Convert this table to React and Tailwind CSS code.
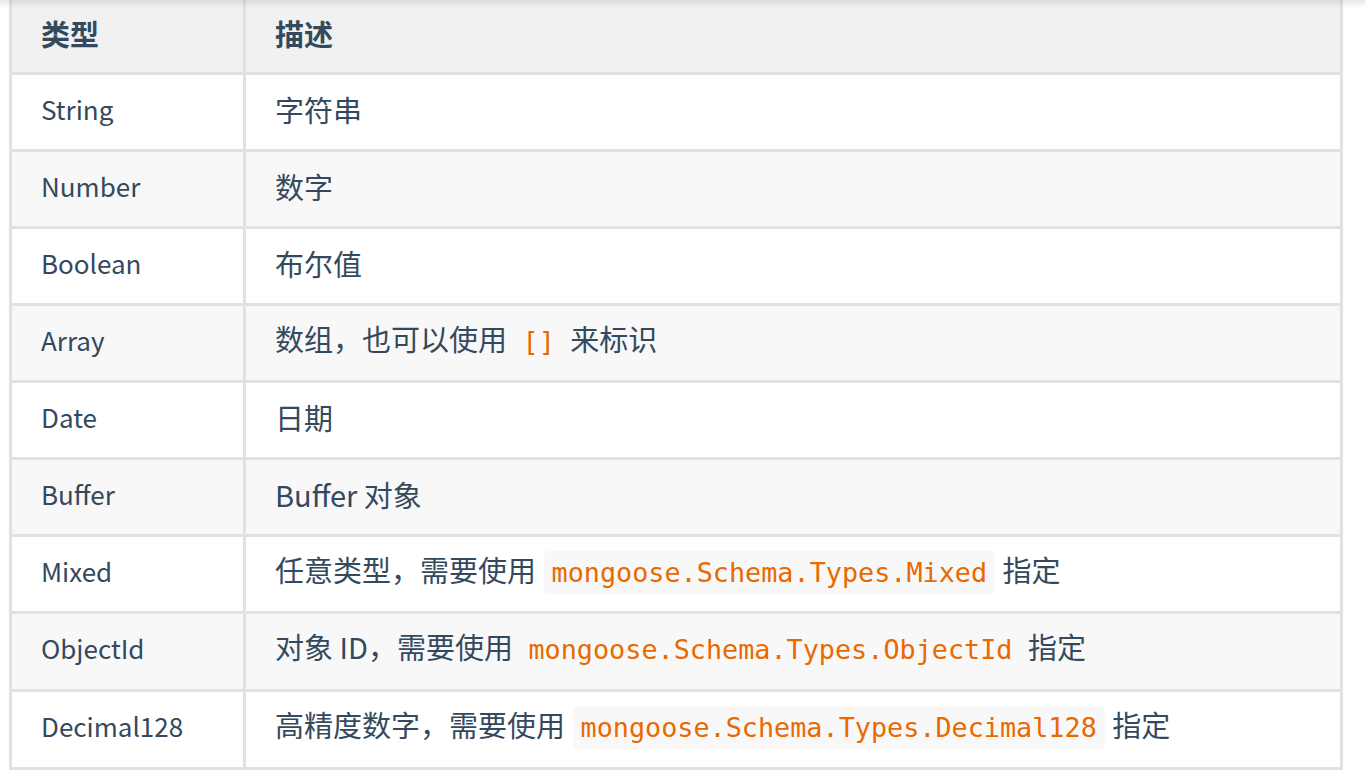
const rows = [
  { type: 'String', desc: ['字符串'] },
  { type: 'Number', desc: ['数字'] },
  { type: 'Boolean', desc: ['布尔值'] },
  { type: 'Array', desc: ['数组，也可以使用 ', { code: '[]' }, ' 来标识'] },
  { type: 'Date', desc: ['日期'] },
  { type: 'Buffer', desc: ['Buffer 对象'] },
  { type: 'Mixed', desc: ['任意类型，需要使用 ', { code: 'mongoose.Schema.Types.Mixed' }, ' 指定'] },
  { type: 'ObjectId', desc: ['对象 ID，需要使用 ', { code: 'mongoose.Schema.Types.ObjectId' }, ' 指定'] },
  { type: 'Decimal128', desc: ['高精度数字，需要使用 ', { code: 'mongoose.Schema.Types.Decimal128' }, ' 指定'] },
];

function Code({ children }) {
  return (
    <code className="mx-[1px] rounded-[4px] bg-[#f8f8f8] px-[8px] py-[6px] font-['DejaVu_Sans_Mono',monospace] text-[26.8px] text-[#e96900]">
      {children}
    </code>
  );
}

export default function App() {
  return (
    <div className="relative min-h-[771px] w-[1365px] overflow-hidden bg-white font-['Noto_Sans_CJK_SC',sans-serif] text-[#34495e]">
      {/* top scroll shadow */}
      <div className="pointer-events-none absolute inset-x-0 top-0 h-[8px] bg-gradient-to-b from-[rgba(0,0,0,0.09)] to-transparent" />

      <div className="pl-[9px]">
        <table className="w-[1334px] border-collapse leading-[40px]">
          <thead>
            <tr className="bg-[#f1f1f1] text-[29px]">
              <th className="h-[73px] w-[234px] border-[3px] border-t-0 border-[#dfe2e5] pb-[6px] pl-[29px] text-left font-bold">类型</th>
              <th className="h-[73px] border-[3px] border-t-0 border-[#dfe2e5] pb-[6px] pl-[29px] text-left font-bold">描述</th>
            </tr>
          </thead>
          <tbody>
            {rows.map((row, i) => {
              const hasLongCode = i >= 7;
              return (
                <tr key={row.type} className={i % 2 === 1 ? 'bg-[#f8f8f8]' : 'bg-white'}>
                  <td className={`${hasLongCode ? 'h-[78px]' : 'h-[77px]'} border-[3px] border-[#dfe2e5] pb-[6px] pl-[29px] text-[26px]`}>{row.type}</td>
                  <td className="border-[3px] border-[#dfe2e5] pb-[6px] pl-[29px] text-[29px] whitespace-pre">
                    {row.desc.map((part, j) =>
                      typeof part === 'string' ? <span key={j}>{part}</span> : <Code key={j}>{part.code}</Code>
                    )}
                  </td>
                </tr>
              );
            })}
          </tbody>
        </table>
      </div>
    </div>
  );
}
